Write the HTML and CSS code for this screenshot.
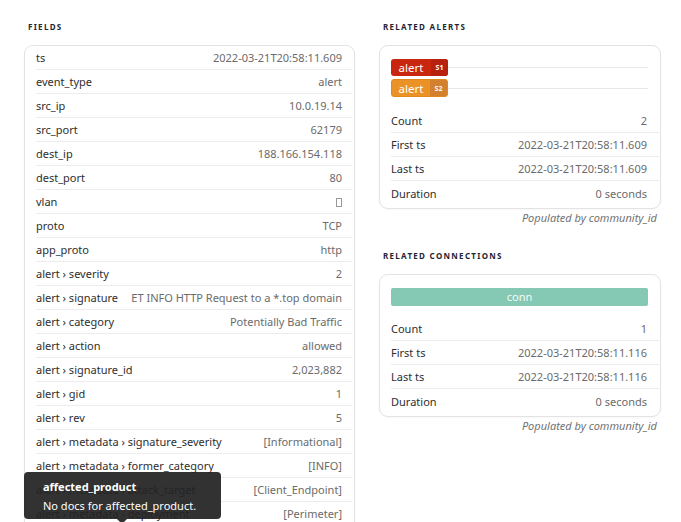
FILE: index.html
```html
<!DOCTYPE html>
<html>
<head>
<meta charset="utf-8">
<link rel="stylesheet" href="styles.css">
</head>
<body>
<div class="page">
  <section class="col col-left">
    <h2 class="heading">FIELDS</h2>
    <div class="card fields">
      <div class="row"><span class="k">ts</span><span class="v">2022-03-21T20:58:11.609</span></div>
      <div class="row"><span class="k">event_type</span><span class="v">alert</span></div>
      <div class="row"><span class="k">src_ip</span><span class="v">10.0.19.14</span></div>
      <div class="row"><span class="k">src_port</span><span class="v">62179</span></div>
      <div class="row"><span class="k">dest_ip</span><span class="v">188.166.154.118</span></div>
      <div class="row"><span class="k">dest_port</span><span class="v">80</span></div>
      <div class="row"><span class="k">vlan</span><span class="v"><span class="empty"></span></span></div>
      <div class="row"><span class="k">proto</span><span class="v">TCP</span></div>
      <div class="row"><span class="k">app_proto</span><span class="v">http</span></div>
      <div class="row"><span class="k">alert › severity</span><span class="v">2</span></div>
      <div class="row"><span class="k">alert › signature</span><span class="v">ET INFO HTTP Request to a *.top domain</span></div>
      <div class="row"><span class="k">alert › category</span><span class="v">Potentially Bad Traffic</span></div>
      <div class="row"><span class="k">alert › action</span><span class="v">allowed</span></div>
      <div class="row"><span class="k">alert › signature_id</span><span class="v">2,023,882</span></div>
      <div class="row"><span class="k">alert › gid</span><span class="v">1</span></div>
      <div class="row"><span class="k">alert › rev</span><span class="v">5</span></div>
      <div class="row"><span class="k">alert › metadata › signature_severity</span><span class="v">[Informational]</span></div>
      <div class="row"><span class="k">alert › metadata › former_category</span><span class="v">[INFO]</span></div>
      <div class="row"><span class="k">alert › metadata › attack_target</span><span class="v">[Client_Endpoint]</span></div>
      <div class="row"><span class="k">alert › metadata › deployment</span><span class="v">[Perimeter]</span></div>
    </div>
    <div class="tooltip">
      <div class="tt-title">affected_product</div>
      <div class="tt-body">No docs for affected_product.</div>
    </div>
  </section>

  <section class="col col-right">
    <h2 class="heading">RELATED ALERTS</h2>
    <div class="card related">
      <div class="badges">
        <div class="badge-line"><span class="badge red"><span class="b-name">alert</span><span class="b-sev">S1</span></span><span class="line"></span></div>
        <div class="badge-line"><span class="badge orange"><span class="b-name">alert</span><span class="b-sev">S2</span></span><span class="line"></span></div>
      </div>
      <div class="rows">
        <div class="row"><span class="k">Count</span><span class="v">2</span></div>
        <div class="row"><span class="k">First ts</span><span class="v">2022-03-21T20:58:11.609</span></div>
        <div class="row"><span class="k">Last ts</span><span class="v">2022-03-21T20:58:11.609</span></div>
        <div class="row"><span class="k">Duration</span><span class="v">0 seconds</span></div>
      </div>
    </div>
    <p class="note">Populated by community_id</p>

    <h2 class="heading heading-conn">RELATED CONNECTIONS</h2>
    <div class="card related conn-card">
      <div class="conn-bar">conn</div>
      <div class="rows">
        <div class="row"><span class="k">Count</span><span class="v">1</span></div>
        <div class="row"><span class="k">First ts</span><span class="v">2022-03-21T20:58:11.116</span></div>
        <div class="row"><span class="k">Last ts</span><span class="v">2022-03-21T20:58:11.116</span></div>
        <div class="row"><span class="k">Duration</span><span class="v">0 seconds</span></div>
      </div>
    </div>
    <p class="note">Populated by community_id</p>
  </section>
</div>
</body>
</html>
```

FILE: styles.css
```css
* { box-sizing: border-box; }
html, body { margin: 0; padding: 0; }
body {
  background: #fff;
  font-family: "Noto Sans", "Open Sans", sans-serif;
  font-size: 11px;
  color: #333;
  overflow: hidden;
  height: 522px;
}
.page {
  display: grid;
  grid-template-columns: 331px 282px;
  column-gap: 24px;
  padding: 0 0 0 24px;
  height: 522px;
  overflow: hidden;
}
.col { position: relative; }
.heading {
  margin: 0;
  padding: 22px 0 0 4px;
  height: 45px;
  font-size: 8px;
  font-weight: 700;
  letter-spacing: 1.3px;
  color: #1e2633;
  line-height: 10px;
}
.card {
  border: 1px solid #e3e3e3;
  border-radius: 9px;
  background: #fff;
  box-shadow: 0 1px 2px rgba(0,0,0,0.03);
}
.fields { height: 480px; border-bottom: none; border-radius: 9px 9px 0 0; }
.row {
  display: flex;
  justify-content: space-between;
  align-items: center;
  height: 24px;
  border-bottom: 1px solid #ececec;
  white-space: nowrap;
}
.fields .row {
  margin: 0 2px 0 11px;
  padding-right: 10px;
}
.k { color: #2e2e2e; }
.v { color: #6b6b6b; }
.empty {
  display: inline-block;
  width: 6px;
  height: 9px;
  border: 1px solid #999;
  vertical-align: -1px;
}

.related { padding: 13px 0 3px 0; }
.related .rows { margin: 12px 0 0 11px; }
.related .row { padding-right: 12px; margin-right: 1px; }
.related .row:last-child { border-bottom: none; }
.badges { display: flex; flex-direction: column; gap: 3px; padding: 0 12px 0 11px; }
.badge-line { display: flex; align-items: center; }
.line { flex: 1; height: 1px; background: #e8e8e8; }
.badge {
  display: inline-flex;
  height: 17px;
  width: 57px;
  border-radius: 3px;
  overflow: hidden;
  color: #fff;
  align-items: stretch;
}
.b-name { flex: 1; display: flex; align-items: center; justify-content: center; font-size: 11.5px; }
.b-sev { width: 17px; display: flex; align-items: center; justify-content: center; font-size: 7px; font-weight: 700; }
.red { background: #c9260f; }
.red .b-sev { background: #b72210; }
.orange { background: #eb9227; height: 18px; border: 1px solid #e3891c; }
.orange .b-sev { background: #d4812f; }
.note {
  margin: 2px 4px 0 0;
  text-align: right;
  font-style: italic;
  color: #727272;
  font-size: 11px;
  line-height: 14px;
}
.heading-conn { padding-top: 26px; height: 49px; }
.conn-card { padding-top: 13px; }
.conn-card .rows { margin-top: 11px; }
.conn-bar {
  margin: 0 12px 0 11px;
  height: 18px;
  border-radius: 2px;
  background: #85c8b3;
  color: #f4fbf8;
  text-align: center;
  line-height: 18px;
  font-size: 11px;
}

.tooltip {
  position: absolute;
  left: 0;
  top: 472px;
  width: 197px;
  height: 47px;
  background: rgba(34,34,34,0.93);
  border-radius: 4px;
  color: #fff;
  padding: 7px 0 0 19px;
}
.tooltip::after {
  content: "";
  position: absolute;
  left: 93px;
  bottom: -5px;
  border-left: 5px solid transparent;
  border-right: 5px solid transparent;
  border-top: 5px solid rgba(34,34,34,0.93);
}
.tt-title { font-weight: 700; line-height: 16px; }
.tt-body { line-height: 16px; margin-top: 3px; }
```
